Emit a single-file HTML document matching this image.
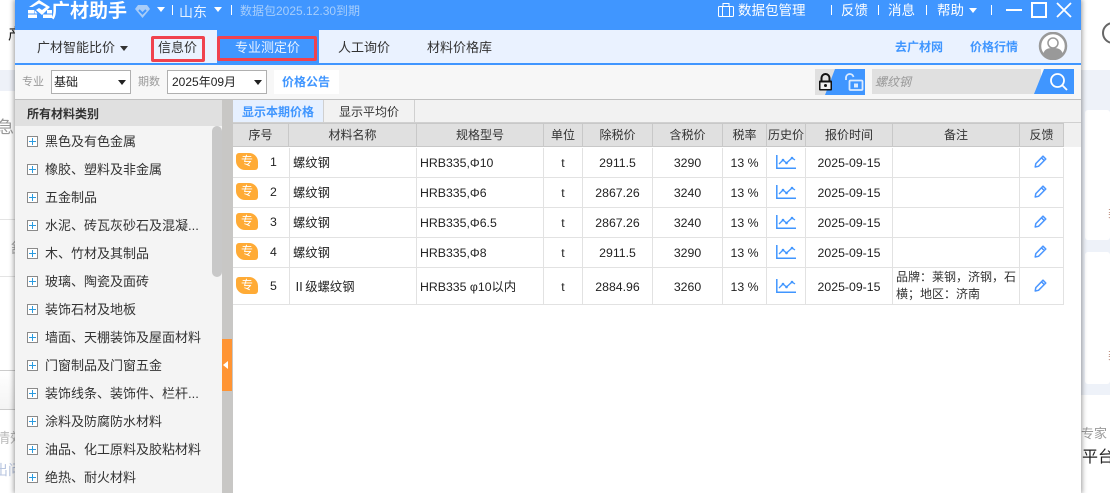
<!DOCTYPE html>
<html lang="zh"><head><meta charset="utf-8"><title>广材助手</title>
<style>
*{box-sizing:border-box}
html,body{margin:0;padding:0;width:1110px;height:493px;overflow:hidden;background:#fff}
body{font-family:"Liberation Sans","Noto Sans CJK SC",sans-serif;font-size:13px;color:#333;position:relative}
.a{position:absolute;white-space:nowrap}
.c{position:absolute;text-align:center;white-space:nowrap}
.win{position:absolute;left:15px;top:0;width:1066px;height:493px;background:#fff;box-shadow:0 0 5px 1px rgba(0,0,0,.4);overflow:hidden}
.top{color:#fff;font-size:14px;line-height:20px}
.sep{position:absolute;width:1px;height:10px;top:5px;background:#fff}
.nav{font-size:13px;line-height:20px;color:#333}
.item{position:absolute;left:30px;font-size:13px;line-height:18px;color:#333;white-space:nowrap}
.plus{position:absolute;left:12px;width:11px;height:11px;border:1px solid #8a8a8a;background:#fff}
.plus:before{content:"";position:absolute;left:1px;top:4px;width:7px;height:1px;background:#2a9be0}
.plus:after{content:"";position:absolute;left:4px;top:1px;width:1px;height:7px;background:#2a9be0}
.h{position:absolute;top:123px;height:24px;background:#e0e0e0;border-right:1px solid #c8c8c8;border-bottom:1px solid #c8c8c8;border-top:1px solid #c8c8c8;text-align:center;font-size:12px;line-height:23px;color:#333}
.row{position:absolute;left:218px;width:831px;background:#fff;border-bottom:1px solid #e2e2e2}
.v{position:absolute;top:148px;height:157px;width:1px;background:#e2e2e2}
.t{position:absolute;font-size:12.3px;line-height:18px;color:#222;white-space:nowrap}
.m{text-align:center}
.tag{position:absolute;left:221px;width:22px;height:17px;background:#FFAB36;border-radius:3px 9px 3px 9px;color:#fff;font-size:12px;line-height:16px;text-align:center}
</style></head><body>

<!-- background page behind the window -->
<div class="a" style="left:8px;top:25px;font-size:15px;color:#222;line-height:20px">产</div>
<div style="position:absolute;left:0;top:70px;width:15px;height:21px;background:#eef1f8"></div>
<div class="a" style="left:-3px;top:117px;font-size:17px;color:#999;line-height:22px">急</div>
<div style="position:absolute;left:0;top:219px;width:15px;height:1px;background:#e4e4e4"></div>
<div class="a" style="left:11px;top:238px;font-size:14px;color:#aaa;line-height:20px">舒</div>
<div style="position:absolute;left:0;top:276px;width:15px;height:1px;background:#e4e4e4"></div>
<div style="position:absolute;left:0;top:370px;width:15px;height:40px;background:linear-gradient(#fff,#f4f4f4);border-top:1px solid #ccc;border-bottom:1px solid #ccc"></div>
<div class="a" style="left:-4px;top:428px;font-size:14px;color:#bbb;line-height:20px">情效</div>
<div class="a" style="left:-6px;top:460px;font-size:14px;color:#b9c6e0;line-height:20px">出问</div>
<div style="position:absolute;left:1081px;top:70px;width:29px;height:423px;background:#eef2f9"></div>
<div style="position:absolute;left:1085px;top:110px;width:25px;height:130px;background:#fff;border-radius:3px"></div>
<div style="position:absolute;left:1085px;top:252px;width:25px;height:132px;background:#fff;border-radius:3px"></div>
<div style="position:absolute;left:1081px;top:395px;width:29px;height:98px;background:#fff"></div>
<div style="position:absolute;left:1102px;top:22px;width:22px;height:22px;border:2px solid #666;border-radius:50%"></div>
<div class="a" style="left:1108px;top:205px;font-size:12px;color:#b87;line-height:16px">类</div>
<div class="a" style="left:1108px;top:347px;font-size:12px;color:#b87;line-height:16px">类</div>
<div class="a" style="left:1081px;top:425px;font-size:13px;color:#999;line-height:18px;width:29px;overflow:hidden">专家</div>
<div class="a" style="left:1082px;top:447px;font-size:16px;color:#222;line-height:22px;width:28px;overflow:hidden">平台</div>

<div class="win">
  <!-- title bar -->
  <div style="position:absolute;left:0;top:0;width:1066px;height:30px;background:#4096FF"></div>
  <svg style="position:absolute;left:13px;top:0" width="24" height="19" viewBox="0 0 24 19"><path d="M11 0 1 7h3.500l6.500-3.500 7 3.500-4 3-3-2-3 2 6 5 8-8z" fill="#fff"/><path d="M0 10h6v3.500H0zm0 4.500h9V18H0zM6.500 10l3 3.500h-3zM19 10h5v3.500h-5zm-4 4.500h9V18h-9z" fill="#fff"/></svg>
  <div class="a" style="left:36px;top:1px;color:#fff;font-size:19px;font-weight:700;line-height:21px">广材助手</div>
  <svg style="position:absolute;left:119px;top:4px" width="17" height="15" viewBox="0 0 17 15"><path d="M4 1h9l3 4-7.500 9L1 5z" fill="#a9cdf8"/><path d="M5 6l3.500 3.500L12 6" fill="none" stroke="#4096FF" stroke-width="2"/></svg>
  <div style="position:absolute;left:142px;top:7px;border:4px solid transparent;border-top:5px solid #fff;border-bottom:0"></div>
  <div class="sep" style="left:157px"></div>
  <div class="a top" style="left:164px;top:2px;font-size:14px;color:#e8f2ff">山东</div>
  <div style="position:absolute;left:199px;top:7px;border:4px solid transparent;border-top:5px solid #fff;border-bottom:0"></div>
  <div class="sep" style="left:216px"></div>
  <div class="a" style="left:225px;top:1px;color:#a6cdfb;font-size:12px;line-height:20px">数据包2025.12.30到期</div>
  <svg style="position:absolute;left:703px;top:3px" width="16" height="14" viewBox="0 0 16 14" fill="none" stroke="#fff" stroke-width="1"><rect x=".5" y="3.500" width="15" height="10" rx="1"/><path d="M5 3.500V.5h6v3M4.500 3.500v10M11.500 3.500v10"/></svg>
  <div class="a top" style="left:723px;top:1px;font-size:13.500px">数据包管理</div>
  <div class="sep" style="left:816px"></div>
  <div class="a top" style="left:826px;top:1px;font-size:13.500px">反馈</div>
  <div class="sep" style="left:863px"></div>
  <div class="a top" style="left:873px;top:1px;font-size:13.500px">消息</div>
  <div class="sep" style="left:911px"></div>
  <div class="a top" style="left:922px;top:1px;font-size:13.500px">帮助</div>
  <div style="position:absolute;left:954px;top:8px;border:4px solid transparent;border-top:5px solid #fff;border-bottom:0"></div>
  <div class="sep" style="left:976px"></div>
  <div style="position:absolute;left:991px;top:9px;width:16px;height:2px;background:#fff"></div>
  <div style="position:absolute;left:1016px;top:2px;width:16px;height:16px;border:2px solid #fff"></div>
  <svg style="position:absolute;left:1041px;top:2px" width="16" height="16" viewBox="0 0 16 16"><path d="M1 1l14 14M15 1 1 15" stroke="#fff" stroke-width="1.800"/></svg>

  <!-- nav -->
  <div style="position:absolute;left:0;top:30px;width:1066px;height:33px;background:#EAF2FF"></div>
  <div style="position:absolute;left:0;top:63px;width:1066px;height:2px;background:#4096FF"></div>
  <div class="a nav" style="left:22px;top:38px">广材智能比价</div>
  <div style="position:absolute;left:105px;top:46px;border:4px solid transparent;border-top:5px solid #333;border-bottom:0"></div>
  <div style="position:absolute;left:136px;top:36px;width:54px;height:26px;border:3px solid #F0424E;border-radius:2px"></div>
  <div class="a nav" style="left:143px;top:38px">信息价</div>
  <div style="position:absolute;left:202px;top:30px;width:102px;height:33px;background:#4096FF"></div>
  <div style="position:absolute;left:202px;top:36px;width:100px;height:25px;border:3px solid #F0424E;border-radius:2px"></div>
  <div class="a nav" style="left:220px;top:38px;color:#e8f2ff">专业测定价</div>
  <div class="a nav" style="left:323px;top:38px">人工询价</div>
  <div class="a nav" style="left:412px;top:38px">材料价格库</div>
  <div class="a" style="left:880px;top:37px;color:#4096FF;font-size:12px;font-weight:700;line-height:20px">去广材网</div>
  <div class="a" style="left:955px;top:37px;color:#4096FF;font-size:12px;font-weight:700;line-height:20px">价格行情</div>
  <svg style="position:absolute;left:1023px;top:32px" width="30" height="28" viewBox="0 0 30 28"><circle cx="15" cy="14" r="13" fill="#fff" stroke="#999" stroke-width="2.500"/><circle cx="15" cy="11" r="5" fill="#fff" stroke="#999" stroke-width="1.500"/><path d="M5 23c1-6 5-7 10-7s9 1 10 7c-3 3-7 4-10 4s-7-1-10-4z" fill="#999"/></svg>

  <!-- toolbar -->
  <div style="position:absolute;left:0;top:65px;width:1066px;height:34px;background:#f7f7f7"></div>
  <div style="position:absolute;left:0;top:99px;width:1066px;height:1px;background:#c0c0c0"></div>
  <div class="a" style="left:7px;top:73px;font-size:11px;color:#999;line-height:18px">专业</div>
  <div style="position:absolute;left:36px;top:70px;width:80px;height:24px;background:#fff;border:1px solid #b0b0b0"></div>
  <div class="a" style="left:39px;top:73px;font-size:12px;color:#222;line-height:18px">基础</div>
  <div style="position:absolute;left:103px;top:80px;border:4px solid transparent;border-top:5px solid #222;border-bottom:0"></div>
  <div class="a" style="left:123px;top:73px;font-size:11px;color:#999;line-height:18px">期数</div>
  <div style="position:absolute;left:152px;top:70px;width:100px;height:24px;background:#fff;border:1px solid #b0b0b0"></div>
  <div class="a" style="left:157px;top:73px;font-size:12px;color:#222;line-height:18px">2025年09月</div>
  <div style="position:absolute;left:239px;top:80px;border:4px solid transparent;border-top:5px solid #222;border-bottom:0"></div>
  <div style="position:absolute;left:259px;top:70px;width:65px;height:24px;background:#fff"></div>
  <div class="a" style="left:267px;top:73px;color:#4096FF;font-size:12px;font-weight:700;line-height:18px">价格公告</div>

  <div style="position:absolute;left:800px;top:69px;width:50px;height:26px;background:#e0e0e0"></div>
  <div style="position:absolute;left:810px;top:69px;width:40px;height:26px;background:#4096FF;clip-path:polygon(10px 0,100% 0,100% 100%,0 100%)"></div>
  <svg style="position:absolute;left:803px;top:73px" width="15" height="18" viewBox="0 0 15 18"><path d="M3.500 8V5a4 4 0 0 1 8 0v3" fill="none" stroke="#111" stroke-width="2"/><rect x="1" y="7.500" width="13" height="10" rx="1" fill="#111"/><rect x="2.500" y="9.500" width="10" height="6.500" fill="#eee"/><circle cx="7.500" cy="12.500" r="1.500" fill="#111"/></svg>
  <svg style="position:absolute;left:830px;top:73px" width="20" height="18" viewBox="0 0 20 18" fill="none" stroke="#dcebff" stroke-width="1.800"><path d="M1 7V4.500a3.800 3.800 0 0 1 7.500-.5"/><rect x="4.500" y="7.500" width="13" height="9.500" rx="1"/><rect x="9" y="10.500" width="4" height="4" fill="#dcebff" stroke="none"/></svg>
  <div style="position:absolute;left:857px;top:69px;width:169px;height:25px;background:#e0e0e0"></div>
  <div class="a" style="left:860px;top:73px;font-size:12px;font-style:italic;color:#999;line-height:18px">螺纹钢</div>
  <div style="position:absolute;left:1019px;top:69px;width:40px;height:25px;background:#4096FF;clip-path:polygon(10px 0,100% 0,100% 100%,0 100%)"></div>
  <svg style="position:absolute;left:1034px;top:72px" width="20" height="20" viewBox="0 0 20 20" fill="none" stroke="#fff" stroke-width="1.800"><circle cx="8.500" cy="8.500" r="6.500"/><path d="M13 13l5 5"/></svg>

  <!-- sidebar -->
  <div style="position:absolute;left:0;top:100px;width:207px;height:393px;background:#f4f4f4"></div>
  <div style="position:absolute;left:0;top:100px;width:207px;height:26px;background:#e0e0e0"></div>
  <div class="a" style="left:12px;top:106px;font-size:12px;font-weight:700;color:#333;line-height:17px">所有材料类别</div>
  <div style="position:absolute;left:197px;top:126px;width:10px;height:151px;background:#c8c8c8;border-radius:5px"></div>
  <div style="position:absolute;left:207px;top:100px;width:11px;height:393px;background:#c8c7c5"></div>
  <div style="position:absolute;left:207px;top:339px;width:10px;height:52px;background:#FF9433"></div>
  <div style="position:absolute;left:208px;top:361px;border:4px solid transparent;border-right:5px solid #fff;border-left:0"></div>

  <div class="plus" style="top:136px"></div><div class="item" style="top:133px">黑色及有色金属</div>
  <div class="plus" style="top:164px"></div><div class="item" style="top:161px">橡胶、塑料及非金属</div>
  <div class="plus" style="top:192px"></div><div class="item" style="top:189px">五金制品</div>
  <div class="plus" style="top:220px"></div><div class="item" style="top:217px">水泥、砖瓦灰砂石及混凝...</div>
  <div class="plus" style="top:248px"></div><div class="item" style="top:245px">木、竹材及其制品</div>
  <div class="plus" style="top:276px"></div><div class="item" style="top:273px">玻璃、陶瓷及面砖</div>
  <div class="plus" style="top:304px"></div><div class="item" style="top:301px">装饰石材及地板</div>
  <div class="plus" style="top:332px"></div><div class="item" style="top:329px">墙面、天棚装饰及屋面材料</div>
  <div class="plus" style="top:360px"></div><div class="item" style="top:357px">门窗制品及门窗五金</div>
  <div class="plus" style="top:388px"></div><div class="item" style="top:385px">装饰线条、装饰件、栏杆...</div>
  <div class="plus" style="top:416px"></div><div class="item" style="top:413px">涂料及防腐防水材料</div>
  <div class="plus" style="top:444px"></div><div class="item" style="top:441px">油品、化工原料及胶粘材料</div>
  <div class="plus" style="top:472px"></div><div class="item" style="top:469px">绝热、耐火材料</div>

  <!-- right panel tabs -->
  <div style="position:absolute;left:218px;top:100px;width:848px;height:23px;background:#f2f2f2;border-bottom:1px solid #d0d0d0"></div>
  <div style="position:absolute;left:218px;top:100px;width:90px;height:22px;background:#e6f0ff"></div>
  <div class="a" style="left:227px;top:104px;color:#4096FF;font-size:12px;font-weight:700;line-height:17px">显示本期价格</div>
  <div style="position:absolute;left:308px;top:100px;width:1px;height:22px;background:#d0d0d0"></div>
  <div style="position:absolute;left:399px;top:100px;width:1px;height:22px;background:#d0d0d0"></div>
  <div class="a" style="left:324px;top:104px;color:#333;font-size:12px;line-height:17px">显示平均价</div>

  <!-- table header -->
  <div style="position:absolute;left:218px;top:123px;width:848px;height:24px;background:#f0f0f0"></div>
  <div class="h" style="left:218px;width:56px">序号</div>
  <div class="h" style="left:274px;width:128px">材料名称</div>
  <div class="h" style="left:402px;width:127px">规格型号</div>
  <div class="h" style="left:529px;width:39px">单位</div>
  <div class="h" style="left:568px;width:70px">除税价</div>
  <div class="h" style="left:638px;width:70px">含税价</div>
  <div class="h" style="left:708px;width:44px">税率</div>
  <div class="h" style="left:752px;width:39px">历史价</div>
  <div class="h" style="left:791px;width:87px">报价时间</div>
  <div class="h" style="left:878px;width:127px">备注</div>
  <div class="h" style="left:1005px;width:44px">反馈</div>

  <!-- table grid -->
  <div class="row" style="top:148px;height:30px"></div>
  <div class="row" style="top:178px;height:30px"></div>
  <div class="row" style="top:208px;height:30px"></div>
  <div class="row" style="top:238px;height:30px"></div>
  <div class="row" style="top:268px;height:37px"></div>
  <div class="v" style="left:274px"></div><div class="v" style="left:401px"></div><div class="v" style="left:528px"></div><div class="v" style="left:567px"></div><div class="v" style="left:637px"></div><div class="v" style="left:707px"></div><div class="v" style="left:751px"></div><div class="v" style="left:790px"></div><div class="v" style="left:877px"></div><div class="v" style="left:1004px"></div><div class="v" style="left:1048px"></div>

  <!-- row 1 -->
  <div class="tag" style="top:153px">专</div><div class="t" style="left:255px;top:153px">1</div><div class="t" style="left:278px;top:154px">螺纹钢</div><div class="t" style="left:405px;top:154px">HRB335,Φ10</div><div class="t m" style="left:528px;width:40px;top:154px">t</div><div class="t m" style="left:568px;width:69px;top:154px">2911.5</div><div class="t m" style="left:638px;width:69px;top:154px">3290</div><div class="t m" style="left:708px;width:43px;top:154px">13 %</div><div class="t m" style="left:791px;width:86px;top:154px">2025-09-15</div>
  <!-- row 2 -->
  <div class="tag" style="top:183px">专</div><div class="t" style="left:255px;top:183px">2</div><div class="t" style="left:278px;top:184px">螺纹钢</div><div class="t" style="left:405px;top:184px">HRB335,Φ6</div><div class="t m" style="left:528px;width:40px;top:184px">t</div><div class="t m" style="left:568px;width:69px;top:184px">2867.26</div><div class="t m" style="left:638px;width:69px;top:184px">3240</div><div class="t m" style="left:708px;width:43px;top:184px">13 %</div><div class="t m" style="left:791px;width:86px;top:184px">2025-09-15</div>
  <!-- row 3 -->
  <div class="tag" style="top:213px">专</div><div class="t" style="left:255px;top:213px">3</div><div class="t" style="left:278px;top:214px">螺纹钢</div><div class="t" style="left:405px;top:214px">HRB335,Φ6.5</div><div class="t m" style="left:528px;width:40px;top:214px">t</div><div class="t m" style="left:568px;width:69px;top:214px">2867.26</div><div class="t m" style="left:638px;width:69px;top:214px">3240</div><div class="t m" style="left:708px;width:43px;top:214px">13 %</div><div class="t m" style="left:791px;width:86px;top:214px">2025-09-15</div>
  <!-- row 4 -->
  <div class="tag" style="top:243px">专</div><div class="t" style="left:255px;top:243px">4</div><div class="t" style="left:278px;top:244px">螺纹钢</div><div class="t" style="left:405px;top:244px">HRB335,Φ8</div><div class="t m" style="left:528px;width:40px;top:244px">t</div><div class="t m" style="left:568px;width:69px;top:244px">2911.5</div><div class="t m" style="left:638px;width:69px;top:244px">3290</div><div class="t m" style="left:708px;width:43px;top:244px">13 %</div><div class="t m" style="left:791px;width:86px;top:244px">2025-09-15</div>
  <!-- row 5 -->
  <div class="tag" style="top:277px">专</div><div class="t" style="left:255px;top:277px">5</div><div class="t" style="left:278px;top:278px">Ⅱ级螺纹钢</div><div class="t" style="left:405px;top:278px">HRB335 φ10以内</div><div class="t m" style="left:528px;width:40px;top:278px">t</div><div class="t m" style="left:568px;width:69px;top:278px">2884.96</div><div class="t m" style="left:638px;width:69px;top:278px">3260</div><div class="t m" style="left:708px;width:43px;top:278px">13 %</div><div class="t m" style="left:791px;width:86px;top:278px">2025-09-15</div>
  <div class="t" style="left:881px;top:269px;font-size:12px;line-height:17px;color:#333;white-space:normal;width:122px">品牌：莱钢，济钢，石横；地区：济南</div>

  <!-- chart + pencil icons -->
  <svg width="0" height="0" style="position:absolute"><defs>
    <symbol id="ch" viewBox="0 0 20 14"><path d="M.8 0v13.200H20" fill="none" stroke="#4096FF" stroke-width="1.500"/><path d="M3 9l4-4 3.500 3L16 3l3 2" fill="none" stroke="#4096FF" stroke-width="1.300"/><circle cx="7" cy="5" r="1.300" fill="#4096FF"/><circle cx="10.500" cy="8" r="1.300" fill="#4096FF"/><circle cx="16" cy="3" r="1.300" fill="#4096FF"/></symbol>
    <symbol id="pn" viewBox="0 0 13 13"><path d="M9 1.200 11.800 4 4.500 11.300 1.200 12l.6-3.400zM7.500 2.800l2.800 2.800" fill="none" stroke="#4A96FF" stroke-width="1.500" stroke-linejoin="round"/></symbol>
  </defs></svg>
  <svg style="position:absolute;left:761px;top:155px" width="20" height="14"><use href="#ch"/></svg>
  <svg style="position:absolute;left:761px;top:185px" width="20" height="14"><use href="#ch"/></svg>
  <svg style="position:absolute;left:761px;top:215px" width="20" height="14"><use href="#ch"/></svg>
  <svg style="position:absolute;left:761px;top:245px" width="20" height="14"><use href="#ch"/></svg>
  <svg style="position:absolute;left:761px;top:279px" width="20" height="14"><use href="#ch"/></svg>
  <svg style="position:absolute;left:1019px;top:155px" width="13" height="13"><use href="#pn"/></svg>
  <svg style="position:absolute;left:1019px;top:185px" width="13" height="13"><use href="#pn"/></svg>
  <svg style="position:absolute;left:1019px;top:215px" width="13" height="13"><use href="#pn"/></svg>
  <svg style="position:absolute;left:1019px;top:245px" width="13" height="13"><use href="#pn"/></svg>
  <svg style="position:absolute;left:1019px;top:279px" width="13" height="13"><use href="#pn"/></svg>
</div>
</body></html>
